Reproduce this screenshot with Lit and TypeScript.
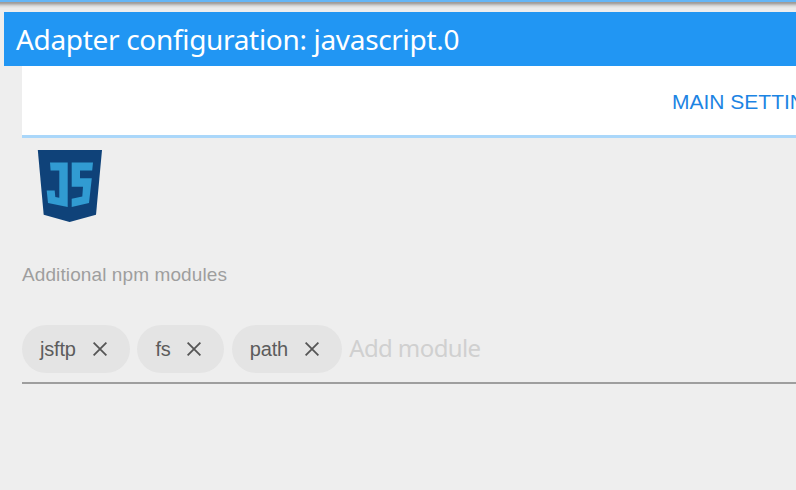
import { LitElement, html, css } from "lit";
import { customElement, property } from "lit/decorators.js";

@customElement("module-chip")
class ModuleChip extends LitElement {
  @property() label = "";
  @property({ type: Number }) labelWidth = 0;

  static styles = css`
    :host {
      display: flex;
      align-items: center;
      box-sizing: border-box;
      height: 48px;
      padding: 0 23px 0 18px;
      border-radius: 24px;
      background: #e4e4e4;
      color: #5c5c5c;
      font: 20px/48px "Liberation Sans", Arial, sans-serif;
    }
    .label {
      flex: none;
      white-space: nowrap;
      letter-spacing: -0.2px;
    }
    .close {
      flex: none;
      width: 14px;
      height: 14px;
      fill: none;
      stroke: #555;
      stroke-width: 1.8;
    }
  `;

  render() {
    return html`
      <span class="label" style="width:${this.labelWidth}px">${this.label}</span>
      <svg class="close" viewBox="0 0 14 14"><path d="M.6.6 13.4 13.4M13.4.6.6 13.4" /></svg>
    `;
  }
}

@customElement("app-root")
class AppRoot extends LitElement {
  static styles = css`
    :host {
      display: block;
      box-sizing: border-box;
      height: 490px;
      overflow: hidden;
      background: #eee;
      font-family: "Liberation Sans", Arial, sans-serif;
    }
    .edge {
      height: 12px;
      background: linear-gradient(
        #64b5f6 0 2px, #a09c98 2px 3px, #a8a6a5 3px 4px, #bcbcbc 4px 5px,
        #d0d0d0 5px 6px, #dedede 6px 7px, #e6e6e6 7px 8px, #ebebeb 8px 10px, #eee 10px
      );
    }
    .title {
      margin-left: 4px;
      height: 54px;
      padding-left: 12px;
      background: #2196f3;
      color: #fff;
      font: 28px/54px "Noto Sans", "Open Sans", sans-serif;
      letter-spacing: -0.32px;
      white-space: nowrap;
    }
    .tabs {
      display: flex;
      box-sizing: border-box;
      margin-left: 22px;
      height: 72px;
      padding-left: 650px;
      border-bottom: 3px solid #aad7fa;
      background: #fff;
      color: #1c84e3;
      font-size: 21px;
      line-height: 71px;
      white-space: nowrap;
      overflow: hidden;
    }
    .content {
      padding: 12px 0 0 22px;
    }
    .logo {
      display: block;
      width: 66px;
      height: 73px;
      margin-left: 15px;
    }
    .caption {
      height: 30px;
      margin-top: 37px;
      color: #9e9e9e;
      font-size: 19px;
      line-height: 30px;
      letter-spacing: 0.1px;
    }
    .chips {
      display: flex;
      height: 57px;
      margin-top: 35px;
      border-bottom: 2px solid #9e9e9e;
    }
    .chips module-chip {
      flex: none;
      margin-right: 7.4px;
    }
    .add {
      color: #d0d0d0;
      font: 24px/45px "Noto Sans", "Open Sans", sans-serif;
      letter-spacing: -0.6px;
      white-space: nowrap;
    }
  `;

  render() {
    return html`
      <div class="edge"></div>
      <div class="title">Adapter configuration: javascript.0</div>
      <div class="tabs">MAIN SETTINGS</div>
      <div class="content">
        <svg class="logo" viewBox="0 0 66 73">
          <path fill="#0f4279" d="M.8 0H65L59 64.7 32.6 72 6.7 64.7Z" />
          <path
            fill="#319bd2"
            d="M13 12.5H30.7V57L11 53 9.7 40.5H17.7L18.3 47 22.3 47.8V20.5H13.6Z
               M34.7 12.5H56L55.2 20.5H43V28.3H54.8L52 53 34.7 57V48.8L45.3 46.6 46 36.8H34.7Z"
          />
        </svg>
        <div class="caption">Additional npm modules</div>
        <div class="chips">
          <module-chip label="jsftp" .labelWidth=${53}></module-chip>
          <module-chip label="fs" .labelWidth=${32}></module-chip>
          <module-chip label="path" .labelWidth=${55}></module-chip>
          <span class="add">Add module</span>
        </div>
      </div>
    `;
  }
}
